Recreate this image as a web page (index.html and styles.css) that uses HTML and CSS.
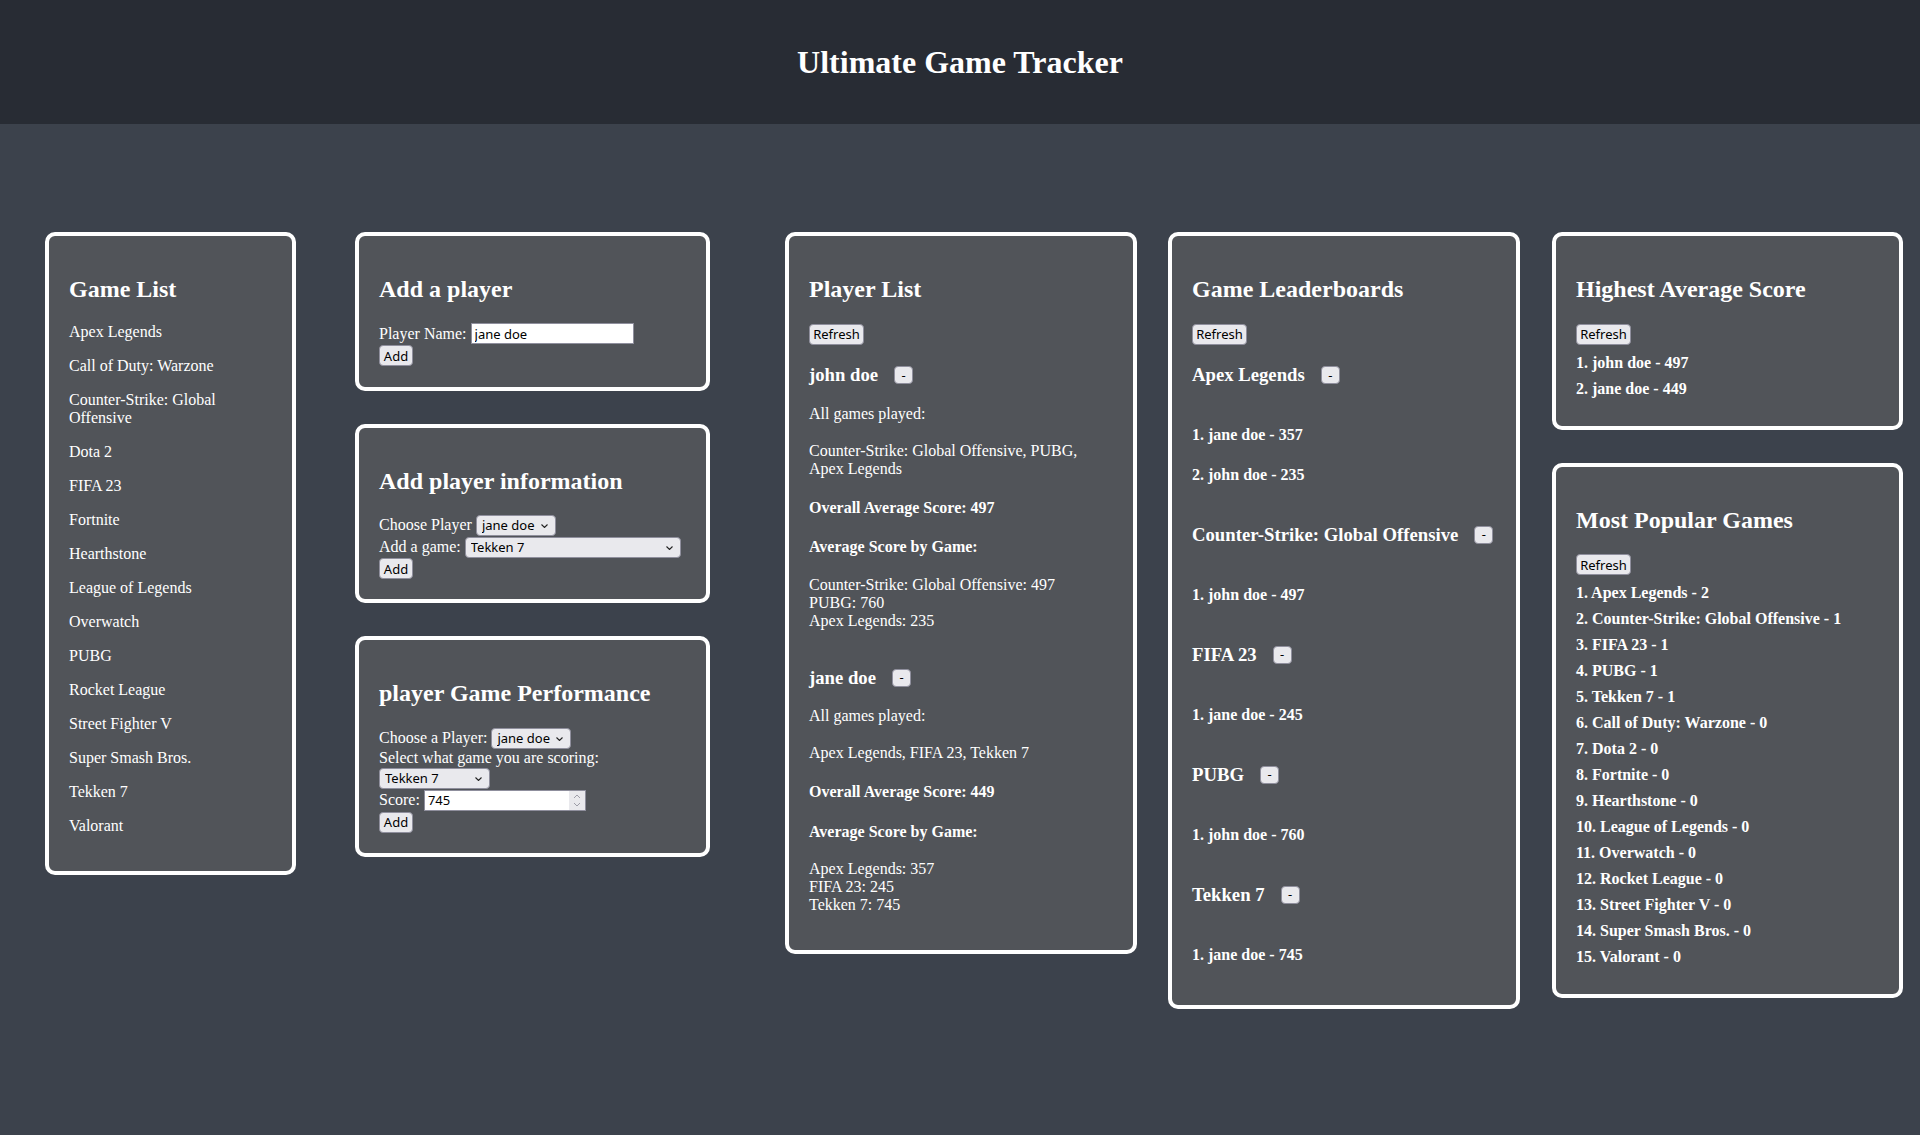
FILE: index.html
```html
<!DOCTYPE html>
<html lang="en">
<head>
<meta charset="utf-8">
<title>Ultimate Game Tracker</title>
<link rel="stylesheet" href="styles.css">
</head>
<body>
<header class="app-header">
  <h1 class="app-title">Ultimate Game Tracker</h1>
</header>
<main class="board">
  <div class="col col-games">
    <section class="card">
      <h2 class="card-title">Game List</h2>
      <p class="item">Apex Legends</p>
      <p class="item">Call of Duty: Warzone</p>
      <p class="item">Counter-Strike: Global Offensive</p>
      <p class="item">Dota 2</p>
      <p class="item">FIFA 23</p>
      <p class="item">Fortnite</p>
      <p class="item">Hearthstone</p>
      <p class="item">League of Legends</p>
      <p class="item">Overwatch</p>
      <p class="item">PUBG</p>
      <p class="item">Rocket League</p>
      <p class="item">Street Fighter V</p>
      <p class="item">Super Smash Bros.</p>
      <p class="item">Tekken 7</p>
      <p class="item">Valorant</p>
    </section>
  </div>

  <div class="col col-forms">
    <section class="card">
      <h2 class="card-title">Add a player</h2>
      <div class="row"><label class="label" for="player-name">Player Name:</label><input id="player-name" class="text-input name-input" type="text" value="jane doe"></div>
      <div class="row"><button class="btn btn-add" type="button">Add</button></div>
    </section>
    <section class="card">
      <h2 class="card-title">Add player information</h2>
      <div class="row"><span class="label">Choose Player</span><span class="select-wrap"><select class="select select-player"><option>jane doe</option><option>john doe</option></select><svg class="chev" viewBox="0 0 7 4"><polyline points="0.5,0.5 3.5,3.5 6.5,0.5" fill="none" stroke="#222" stroke-width="1.1"/></svg></span></div>
      <div class="row"><span class="label">Add a game:</span><span class="select-wrap"><select class="select select-game-wide"><option>Tekken 7</option><option>Counter-Strike: Global Offensive</option></select><svg class="chev" viewBox="0 0 7 4"><polyline points="0.5,0.5 3.5,3.5 6.5,0.5" fill="none" stroke="#222" stroke-width="1.1"/></svg></span></div>
      <div class="row row-tight"><button class="btn btn-add" type="button">Add</button></div>
    </section>
    <section class="card">
      <h2 class="card-title">player Game Performance</h2>
      <div class="row"><span class="label">Choose a Player:</span><span class="select-wrap"><select class="select select-player"><option>jane doe</option><option>john doe</option></select><svg class="chev" viewBox="0 0 7 4"><polyline points="0.5,0.5 3.5,3.5 6.5,0.5" fill="none" stroke="#222" stroke-width="1.1"/></svg></span></div>
      <div class="text-row">Select what game you are scoring:</div>
      <div class="row"><span class="select-wrap"><select class="select select-game"><option>Tekken 7</option></select><svg class="chev" viewBox="0 0 7 4"><polyline points="0.5,0.5 3.5,3.5 6.5,0.5" fill="none" stroke="#222" stroke-width="1.1"/></svg></span></div>
      <div class="row"><span class="label">Score:</span><span class="number-wrap"><input class="text-input score-input" type="text" value="745"><span class="spinner"><svg class="spinner-icon" viewBox="0 0 16 19"><rect x="0" y="0" width="16" height="19" fill="#e9e9ed"/><polyline points="5,7 8,4 11,7" fill="none" stroke="#9d9da8" stroke-width="1"/><polyline points="5,12 8,15 11,12" fill="none" stroke="#9d9da8" stroke-width="1"/></svg></span></span></div>
      <div class="row"><button class="btn btn-add" type="button">Add</button></div>
    </section>
  </div>

  <div class="col col-players">
    <section class="card">
      <h2 class="card-title">Player List</h2>
      <div class="toolbar"><button class="btn btn-refresh" type="button">Refresh</button></div>
      <div class="player">
        <h3 class="section-title">john doe<button class="btn btn-remove" type="button">-</button></h3>
        <p class="text">All games played:</p>
        <p class="games">Counter-Strike: Global Offensive, PUBG, Apex Legends</p>
        <h4 class="stat">Overall Average Score: 497</h4>
        <h4 class="stat stat-last">Average Score by Game:</h4>
        <p class="scores">Counter-Strike: Global Offensive: 497<br>PUBG: 760<br>Apex Legends: 235</p>
      </div>
      <div class="player">
        <h3 class="section-title">jane doe<button class="btn btn-remove" type="button">-</button></h3>
        <p class="text">All games played:</p>
        <p class="games">Apex Legends, FIFA 23, Tekken 7</p>
        <h4 class="stat">Overall Average Score: 449</h4>
        <h4 class="stat stat-last">Average Score by Game:</h4>
        <p class="scores">Apex Legends: 357<br>FIFA 23: 245<br>Tekken 7: 745</p>
      </div>
    </section>
  </div>

  <div class="col col-leader">
    <section class="card">
      <h2 class="card-title">Game Leaderboards</h2>
      <div class="toolbar"><button class="btn btn-refresh" type="button">Refresh</button></div>
      <div class="lb-game">
        <h3 class="section-title">Apex Legends<button class="btn btn-remove" type="button">-</button></h3>
        <div class="lb-entries">
          <h4 class="stat">1. jane doe - 357</h4>
          <h4 class="stat">2. john doe - 235</h4>
        </div>
      </div>
      <div class="lb-game">
        <h3 class="section-title">Counter-Strike: Global Offensive<button class="btn btn-remove" type="button">-</button></h3>
        <div class="lb-entries">
          <h4 class="stat">1. john doe - 497</h4>
        </div>
      </div>
      <div class="lb-game">
        <h3 class="section-title">FIFA 23<button class="btn btn-remove" type="button">-</button></h3>
        <div class="lb-entries">
          <h4 class="stat">1. jane doe - 245</h4>
        </div>
      </div>
      <div class="lb-game">
        <h3 class="section-title">PUBG<button class="btn btn-remove" type="button">-</button></h3>
        <div class="lb-entries">
          <h4 class="stat">1. john doe - 760</h4>
        </div>
      </div>
      <div class="lb-game">
        <h3 class="section-title">Tekken 7<button class="btn btn-remove" type="button">-</button></h3>
        <div class="lb-entries">
          <h4 class="stat">1. jane doe - 745</h4>
        </div>
      </div>
    </section>
  </div>

  <div class="col col-stats">
    <section class="card">
      <h2 class="card-title">Highest Average Score</h2>
      <div class="toolbar"><button class="btn btn-refresh" type="button">Refresh</button></div>
      <p class="rank">1. john doe - 497</p>
      <p class="rank">2. jane doe - 449</p>
    </section>
    <section class="card">
      <h2 class="card-title">Most Popular Games</h2>
      <div class="toolbar"><button class="btn btn-refresh" type="button">Refresh</button></div>
      <p class="rank">1. Apex Legends - 2</p>
      <p class="rank">2. Counter-Strike: Global Offensive - 1</p>
      <p class="rank">3. FIFA 23 - 1</p>
      <p class="rank">4. PUBG - 1</p>
      <p class="rank">5. Tekken 7 - 1</p>
      <p class="rank">6. Call of Duty: Warzone - 0</p>
      <p class="rank">7. Dota 2 - 0</p>
      <p class="rank">8. Fortnite - 0</p>
      <p class="rank">9. Hearthstone - 0</p>
      <p class="rank">10. League of Legends - 0</p>
      <p class="rank">11. Overwatch - 0</p>
      <p class="rank">12. Rocket League - 0</p>
      <p class="rank">13. Street Fighter V - 0</p>
      <p class="rank">14. Super Smash Bros. - 0</p>
      <p class="rank">15. Valorant - 0</p>
    </section>
  </div>
</main>
</body>
</html>
```

FILE: styles.css
```css
html, body {
  margin: 0;
  padding: 0;
}

body {
  background: #3c424c;
  color: #ffffff;
  font-family: "Liberation Serif", "Times New Roman", serif;
  font-size: 16px;
  line-height: 18px;
  min-height: 100vh;
}

.app-header {
  background: #282c34;
  padding: 22px 0;
  text-align: center;
}

.app-title {
  margin: 22.2px 0 20.68px;
  font-size: 32px;
  line-height: 37px;
  font-weight: bold;
}

.board {
  display: flex;
  align-items: flex-start;
  padding: 108px 0 0 45px;
}

.col {
  display: flex;
  flex-direction: column;
  gap: 33px;
  flex: 0 0 auto;
}

.col-games { width: 251px; }
.col-forms { width: 355px; margin-left: 59px; }
.col-players { width: 352px; margin-left: 75px; }
.col-leader { width: 352px; margin-left: 31px; }
.col-stats { width: 351px; margin-left: 32px; }

.card {
  background: #515459;
  border: 4px solid #ffffff;
  border-radius: 10px;
  padding: 20px;
}

.card-title {
  margin: 19.92px 0;
  font-size: 24px;
  line-height: 27px;
  font-weight: bold;
}

.item {
  margin: 16px 0;
}

.toolbar {
  height: 23px;
  display: flex;
  align-items: center;
}

.section-title {
  display: flex;
  align-items: center;
  margin: 18.72px 0;
  font-size: 18.72px;
  line-height: 22px;
  font-weight: bold;
}

.player {
  display: flow-root;
}

.player + .player {
  margin-top: 2px;
}

.text {
  margin: 16px 0;
}

.games {
  margin: 18.72px 0 16px;
}

.stat {
  margin: 21.28px 0;
  font-size: 16px;
  line-height: 18px;
  font-weight: bold;
}

.stat-last {
  margin-bottom: 19.5px;
}

.scores {
  margin: 16px 0;
}

.lb-entries {
  display: flow-root;
}

.rank {
  margin: 8px 0;
  font-weight: bold;
}

/* form rows */
.row {
  height: 22px;
  display: flex;
  align-items: center;
}

.row-tight {
  height: 21px;
}

.text-row {
  line-height: 18px;
}

.label {
  margin-right: 4px;
  white-space: nowrap;
}

/* controls (Firefox-like look) */
.btn {
  box-sizing: border-box;
  font-family: "Noto Sans", "Open Sans", sans-serif;
  font-size: 13px;
  color: #000000;
  background: #e9e9ed;
  border: 1px solid #8f8f9d;
  border-radius: 4px;
  height: 21px;
  line-height: 18px;
  padding: 0;
  margin: 0;
  text-align: center;
}

.btn-refresh { width: 55px; }
.btn-add { width: 34px; }

.btn-remove {
  width: 19px;
  height: 18px;
  line-height: 15px;
  margin-left: 16px;
  font-weight: normal;
}

.select-wrap,
.number-wrap {
  position: relative;
  display: inline-flex;
}

.select {
  -webkit-appearance: none;
  appearance: none;
  box-sizing: border-box;
  font-family: "Noto Sans", "Open Sans", sans-serif;
  font-size: 13px;
  color: #000000;
  background: #e9e9ed;
  border: 1px solid #8f8f9d;
  border-radius: 4px;
  height: 21px;
  padding: 0 0 0 5px;
  margin: 0;
}

.select-player { width: 80px; }
.select-game-wide { width: 216px; }
.select-game { width: 111px; }

.chev {
  position: absolute;
  right: 8px;
  top: 9px;
  width: 7px;
  height: 4px;
  pointer-events: none;
}

.text-input {
  box-sizing: border-box;
  font-family: "Noto Sans", "Open Sans", sans-serif;
  font-size: 13px;
  color: #000000;
  background: #ffffff;
  border: 1px solid #8f8f9d;
  border-radius: 0;
  height: 21px;
  padding: 0 3px;
  margin: 0;
  outline: none;
}

.name-input { width: 163px; }
.score-input { width: 162px; padding-right: 20px; }

.spinner {
  position: absolute;
  right: 1px;
  top: 1px;
  width: 16px;
  height: 19px;
  pointer-events: none;
}

.spinner-icon {
  display: block;
  width: 16px;
  height: 19px;
}
```
